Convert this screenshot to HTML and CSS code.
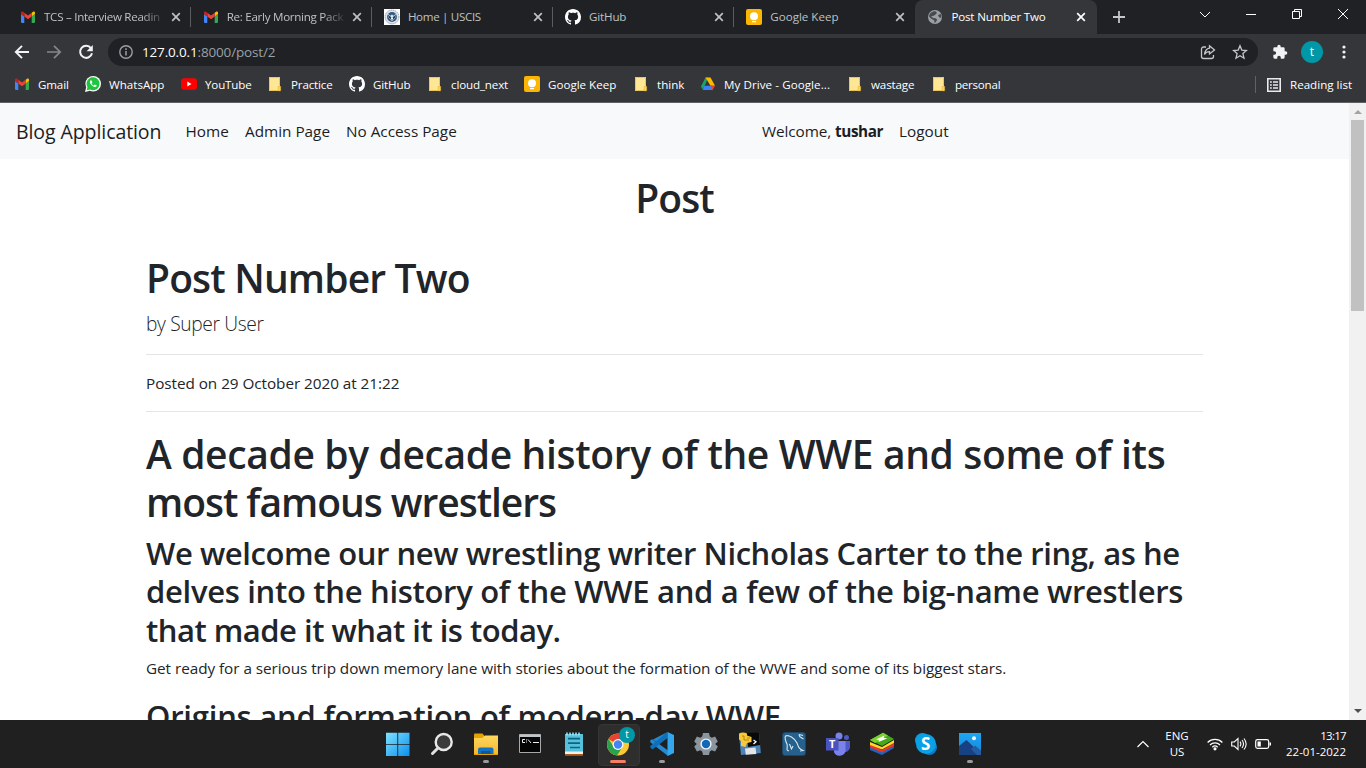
FILE: index.html
```html
<!DOCTYPE html>
<html lang="en">
<head>
<meta charset="utf-8">
<title>Post Number Two</title>
<link rel="stylesheet" href="styles.css">
</head>
<body>
<svg class="defs" width="0" height="0">
  <defs>
    <linearGradient id="winblue" x1="0" y1="0" x2="1" y2="1"><stop offset="0" stop-color="#7fe3ff"/><stop offset="1" stop-color="#0a8fee"/></linearGradient>
    <linearGradient id="foldgrad" x1="0" y1="0" x2="0" y2="1"><stop offset="0" stop-color="#ffd75e"/><stop offset="1" stop-color="#f5b62c"/></linearGradient>
    <linearGradient id="photograd" x1="0" y1="0" x2="0" y2="1"><stop offset="0" stop-color="#1ea7f0"/><stop offset="1" stop-color="#1684dd"/></linearGradient>
    <symbol id="gmail" viewBox="0 0 16 16"><path fill="#4285f4" d="M1 5l3.300 2.400V14H2.100A1.100 1.100 0 0 1 1 12.900z"/><path fill="#34a853" d="M11.700 7.400L15 5v7.900a1.100 1.100 0 0 1-1.100 1.100h-2.200z"/><path fill="#fbbc04" d="M11.700 3.800L13 2.800c.9-.6 2 0 2 1.100V5l-3.300 2.500z"/><path fill="#ea4335" d="M4.300 7.500V3.700L8 6.500l3.700-2.800v3.800L8 10.300z"/><path fill="#c5221f" d="M1 3.900c0-1.100 1.200-1.700 2-1.100l1.300 1v3.700L1 5z"/></symbol>
    <symbol id="github" viewBox="0 0 16 16"><path fill="#fff" d="M8 0C3.580 0 0 3.580 0 8c0 3.540 2.290 6.530 5.470 7.590.4.070.55-.17.55-.38 0-.19-.010-.82-.010-1.490-2.010.37-2.530-.49-2.690-.94-.090-.23-.48-.94-.82-1.130-.28-.15-.68-.52-.010-.53.63-.010 1.080.58 1.230.82.72 1.210 1.870.87 2.330.66.070-.52.28-.87.510-1.070-1.780-.2-3.640-.89-3.640-3.950 0-.87.310-1.590.82-2.150-.080-.2-.36-1.020.080-2.120 0 0 .67-.21 2.200.82.64-.18 1.320-.27 2-.27s1.360.090 2 .27c1.530-1.040 2.200-.82 2.200-.82.44 1.100.16 1.920.080 2.120.51.56.82 1.270.82 2.150 0 3.070-1.870 3.750-3.650 3.950.29.25.54.73.54 1.480 0 1.070-.010 1.930-.010 2.200 0 .21.15.46.55.38A8 8 0 0 0 16 8c0-4.420-3.580-8-8-8z"/></symbol>
    <symbol id="keep" viewBox="0 0 16 16"><rect width="16" height="16" rx="2" fill="#fbb504"/><circle cx="8" cy="7.200" r="4" fill="#fff"/><path fill="#fff" d="M6 9h4v2H6zM6 12h4v1.300H6z"/></symbol>
    <symbol id="folder" viewBox="0 0 16 16"><path fill="#ffe695" d="M2 1h11v14H2z"/><path fill="none" stroke="#eac557" d="M2.500 14.500v-13h10v8M2.500 14.500h9"/><path fill="#ffd560" stroke="#e2b93c" stroke-width=".7" d="M11.200 10.500h2.400v4.200h-2.400z"/></symbol>
    <symbol id="close" viewBox="0 0 10 10"><path d="M1.200 1.200l7.600 7.600M8.800 1.200L1.200 8.800" stroke="currentColor" stroke-width="1.700" fill="none"/></symbol>
  </defs>
</svg>

<div class="screen">
<header class="tabstrip">
  <div class="tab first"><svg class="fav"><use href="#gmail"/></svg><span class="title fade">TCS – Interview Readin</span><svg class="x"><use href="#close"/></svg></div>
  <div class="tab"><svg class="fav"><use href="#gmail"/></svg><span class="title fade">Re: Early Morning Pack</span><svg class="x"><use href="#close"/></svg></div>
  <div class="tab uscis"><svg class="fav" viewBox="0 0 16 16"><path fill="#fff" d="M0 0h16v16H0z"/><circle cx="8" cy="8" r="6.900" fill="#dfe5ec" stroke="#8fa0b3" stroke-dasharray="1.500 .7"/><circle cx="8" cy="8" r="4.900" fill="#34597c"/><path d="M3.500 4.800l3.300 2L8 5.300l1.200 1.500 3.300-2-.9 3.800L8 12.200 4.400 8.600z" fill="#dbe5ed"/><path d="M3.900 5.500L7 8h2l3.100-2.500-.8 3L8 11.500 4.700 8.500z" fill="#1d405f"/><path d="M7 8.200h2V10l-1 1-1-1z" fill="#f4f4f4"/></svg><span class="title">Home | USCIS</span><svg class="x"><use href="#close"/></svg></div>
  <div class="tab"><svg class="fav"><use href="#github"/></svg><span class="title">GitHub</span><svg class="x"><use href="#close"/></svg></div>
  <div class="tab nosep keep"><svg class="fav"><use href="#keep"/></svg><span class="title">Google Keep</span><svg class="x"><use href="#close"/></svg></div>
  <div class="tab active"><svg class="fav" viewBox="0 0 16 16"><circle cx="8" cy="8" r="7" fill="#9aa0a6"/><path d="M8.500 2.200L10 4 8 6 6 7l-2 .2 2.500 2L8 9l2.200 1.500L9 13l-1.500 1-.2-2.500L4 9.500 2 7.500C2.200 4.500 5 2 8.500 2.200zM11 6l3-1 .4 4-2.400-.8z" fill="#484a4e"/></svg><span class="title">Post Number Two</span><svg class="x"><use href="#close"/></svg></div>
  <svg class="plus" viewBox="0 0 12 12"><path d="M6 0v12M0 6h12" stroke="#c4c7ca" stroke-width="1.800"/></svg>
  <div class="winctl">
    <svg viewBox="0 0 12 12"><path d="M1 4l5 5 5-5"/></svg>
    <svg viewBox="0 0 12 12"><path d="M1 6.500h10"/></svg>
    <svg viewBox="0 0 12 12"><path d="M1.500 3.500h7v7h-7zM3.500 3.500v-2h7v7h-2"/></svg>
    <svg viewBox="0 0 12 12"><path d="M1 1l10 10M11 1L1 11"/></svg>
  </div>
</header>

<div class="toolbar">
  <svg class="tb" viewBox="0 0 16 16"><path d="M15 8H2M8 1.800L1.800 8 8 14.200" fill="none" stroke="#f1f3f4" stroke-width="1.900"/></svg>
  <svg class="tb" viewBox="0 0 16 16"><path d="M1 8h13M8 1.800L14.200 8 8 14.200" fill="none" stroke="#85878a" stroke-width="1.700"/></svg>
  <svg class="tb" viewBox="0 0 16 16"><path d="M13 4.300A6 6 0 1 0 14 9.200" fill="none" stroke="#f1f3f4" stroke-width="2"/><path d="M14.800 1v6.200H8.600z" fill="#f1f3f4"/></svg>
  <div class="omnibox">
    <svg class="info" viewBox="0 0 14 14"><circle cx="7" cy="7" r="6.200" fill="none" stroke="#9aa0a6" stroke-width="1.400"/><path d="M7 6v4.500M7 3.300v1.600" stroke="#9aa0a6" stroke-width="1.500"/></svg>
    <span class="url"><b>127.0.0.1</b>:8000/post/2</span>
    <svg class="share" viewBox="0 0 16 16"><path d="M6 3H3.500A2 2 0 0 0 1.500 5v7.500a2 2 0 0 0 2 2h8a2 2 0 0 0 2-2V11"/><path d="M9.500 1.800L14.500 6l-5 4V7.700C7 7.700 5.500 8.700 4.500 10.500 5 7 6.500 4.600 9.500 4.200z"/></svg>
    <svg class="star" viewBox="0 0 16 16"><path d="M8 1.800l1.800 4.300 4.700.4-3.600 3.100 1.100 4.600L8 11.800l-4 2.400 1.100-4.600L1.500 6.500l4.700-.4z"/></svg>
  </div>
  <svg class="puzzle" viewBox="0 0 24 24"><path fill="#f1f3f4" d="M20.500 11H19V7a2 2 0 0 0-2-2h-4V3.500a2.500 2.500 0 0 0-5 0V5H4a2 2 0 0 0-2 2v3.800h1.500a2.700 2.700 0 0 1 0 5.400H2V20a2 2 0 0 0 2 2h3.800v-1.500a2.700 2.700 0 0 1 5.400 0V22H17a2 2 0 0 0 2-2v-4h1.500a2.500 2.500 0 0 0 0-5z"/></svg>
  <span class="avatar">t</span>
  <svg class="dots" viewBox="0 0 4 16"><circle cx="2" cy="3" r="1.600"/><circle cx="2" cy="8" r="1.600"/><circle cx="2" cy="13" r="1.600"/></svg>
</div>

<nav class="bookmarks">
  <div class="bm"><svg><use href="#gmail"/></svg><span>Gmail</span></div>
  <div class="bm even"><svg viewBox="0 0 16 16"><circle cx="8.200" cy="7.800" r="7.800" fill="#fff"/><path d="M0 16l1.300-5L5 14.700z" fill="#fff"/><path d="M1.700 14.300l.8-3.200a6.500 6.500 0 1 1 2.600 2.400z" fill="#20c43f"/><path d="M5.700 4.200c-1.500 1-.9 3 .8 4.800s3.900 2.700 5.200 1.100c.3-.7-.1-1-1.900-1.600l-.9 1C7.800 9.200 7 8.300 6.600 7.400l.8-1c-.5-1.500-.8-2.400-1.700-2.200z" fill="#fff"/></svg><span>WhatsApp</span></div>
  <div class="bm"><svg viewBox="0 0 16 16"><rect y="2.200" width="16" height="11.600" rx="3" fill="#f00"/><path d="M6.300 5.600v4.800l4.200-2.400z" fill="#fff"/></svg><span>YouTube</span></div>
  <div class="bm"><svg><use href="#folder"/></svg><span>Practice</span></div>
  <div class="bm"><svg><use href="#github"/></svg><span>GitHub</span></div>
  <div class="bm"><svg><use href="#folder"/></svg><span>cloud_next</span></div>
  <div class="bm even"><svg><use href="#keep"/></svg><span>Google Keep</span></div>
  <div class="bm even"><svg><use href="#folder"/></svg><span>think</span></div>
  <div class="bm wide"><svg viewBox="0 0 16 16"><path fill="#1ea362" d="M5.500 1.500h2.600L5.500 8 2.700 13.500 1 10.500z"/><path fill="#ffba00" d="M5.500 1.500h5L15 9.700h-4.500z"/><path fill="#3b82f6" d="M4.300 9.700h7.300l1.400 4.300H2.800z"/><path fill="#ea4335" d="M10.500 9.700H15l-2.300 4z"/></svg><span>My Drive - Google...</span></div>
  <div class="bm"><svg><use href="#folder"/></svg><span>wastage</span></div>
  <div class="bm tight"><svg><use href="#folder"/></svg><span>personal</span></div>
  <div class="bm even reading"><svg viewBox="0 0 16 16"><path d="M1.800 1.800h12.400v12.400H1.800z" fill="none" stroke="#e8eaed" stroke-width="1.600"/><path d="M4 5h1.800M4 8h1.800M4 11h1.800M7 5h5M7 8h5M7 11h5" stroke="#e8eaed" stroke-width="1.400"/></svg><span>Reading list</span></div>
</nav>

<div class="viewport">
  <main class="page">
    <nav class="navbar">
      <div class="left">
        <a class="brand">Blog Application</a>
        <a class="link home">Home</a>
        <a class="link admin">Admin Page</a>
        <a class="link">No Access Page</a>
      </div>
      <div class="right">
        <a class="link welcome">Welcome, <b>tushar</b></a>
        <a class="link">Logout</a>
      </div>
    </nav>
    <h1 class="pagehead">Post</h1>
    <article class="post">
      <h1 class="posttitle">Post Number Two</h1>
      <p class="lead">by Super User</p>
      <hr>
      <p class="posted">Posted on 29 October 2020 at 21:22</p>
      <hr>
      <h1 class="headline"><span class="h1-first">A decade by decade history of the WWE and some of its</span><br><span class="h1-second">most famous wrestlers</span></h1>
      <h2 class="intro"><span class="h2-first">We welcome our new wrestling writer Nicholas Carter to the ring, as he</span><br><span class="h2-second">delves into the history of the WWE and a few of the big-name wrestlers</span><br><span class="h2-third">that made it what it is today.</span></h2>
      <p class="body">Get ready for a serious trip down memory lane with stories about the formation of the WWE and some of its biggest stars.</p>
      <h2 class="origins">Origins and formation of modern-day WWE</h2>
    </article>
  </main>
  <aside class="scroll">
    <svg class="arrow" viewBox="0 0 8 4"><path d="M4 0l4 4H0z" fill="#a3a3a3"/></svg>
    <i class="thumb"></i>
    <svg class="arrow down" viewBox="0 0 8 4"><path d="M4 4L0 0h8z" fill="#505050"/></svg>
  </aside>
</div>

<footer class="taskbar">
  <div class="apps">
    <div class="app"><svg viewBox="0 0 24 24"><path fill="url(#winblue)" d="M0 .7h11.300V12H0zM12.200.7h11.300V12H12.200zM0 12.700h11.300V24H0zM12.200 12.700h11.300V24H12.200z"/></svg></div>
    <div class="app"><svg viewBox="0 0 24 24"><circle cx="13.700" cy="10" r="8" fill="#3b3b3b" stroke="#e9e9e9" stroke-width="2.400"/><path d="M8 16l-5.500 5.500" stroke="#e0e0e0" stroke-width="3" stroke-linecap="round"/></svg></div>
    <div class="app run"><svg viewBox="0 0 24 24"><path fill="#e5a100" d="M0 2.500Q0 1.500 1 1.500h7.500l2 2.500v5H0z"/><path fill="url(#foldgrad)" d="M0 6h8l3-2.500h13V23H0z"/><path fill="#1673c4" d="M4 22v-4.500Q4 15.500 6 15.500h11.500q2 0 2 2V22z"/><path fill="#0c57a0" d="M7 19h9.500v3H7z"/><path fill="#e5a100" d="M0 22h24v1H0z"/></svg></div>
    <div class="app cmd"><svg viewBox="0 0 24 24"><path fill="#050505" stroke="#a8a8a8" d="M1.500 2.500h21v18h-21z"/><path fill="#bfc5c9" d="M1.500 2.500h21V5h-21z"/><path d="M7 7.500H4.500v3H7M8.500 7.500v1M8.500 9.500v1M10 7.500l3 3.500M15 10.500h6" fill="none" stroke="#eee"/></svg></div>
    <div class="app"><svg viewBox="0 0 24 24"><path fill="#55c1dc" d="M3 2h18v19H3z"/><path fill="#f5eee6" d="M3 19.500h18V22H3z"/><path fill="#a85a1c" d="M3 22h18v1.800H3z"/><path d="M5 .5v3M8 .5v3M11 .5v3M14 .5v3M17 .5v3" stroke="#a5e8f5" stroke-width="1.500"/><path d="M6 6.700h12M6 11.200h12M8 15.500h10" stroke="#11647d" stroke-width="1.700"/></svg></div>
    <div class="app run chrome"><svg viewBox="0 0 24 24"><circle cx="12" cy="12.500" r="11" fill="#fbc934"/><path d="M12 12.500L2.500 7A11 11 0 0 1 21.500 7.500H12z" fill="#e94235"/><path d="M2.500 7A11 11 0 0 0 11 23.450L16.500 15 7.500 14.500z" fill="#2aa14c"/><circle cx="12" cy="12.500" r="5.400" fill="#fff"/><circle cx="12" cy="12.500" r="4.200" fill="#4285f4"/></svg><em>t</em></div>
    <div class="app run"><svg viewBox="0 0 24 24"><path fill="#2489d0" d="M17.500 0L6.500 10.500 2.200 7.200.3 8.200v2L18 24v-5.500L3 7.500z"/><path fill="#0e70b8" d="M17.500 0v6L2.500 17.500.3 15.500v-1.500z"/><path fill="#34a6ee" d="M17.500 0L24 3v18l-6.500 3z"/></svg></div>
    <div class="app"><svg viewBox="0 0 24 24"><path fill="#8b959e" d="M9 1h6l.8 3.600 2 1.200 3.300-1.200 2.700 5-2.600 2.400 2.600 2.500-2.700 5-3.300-1.200-2 1.200L15 23H9l-.8-3.500-2-1.200-3.300 1.200-2.700-5L2.800 12 .2 9.600l2.700-5 3.300 1.200 2-1.200z"/><circle cx="12" cy="12" r="5.600" fill="#f2f5f8"/><circle cx="12" cy="12" r="4.200" fill="#1269b8"/></svg></div>
    <div class="app"><svg viewBox="0 0 24 24"><path fill="#4d83b7" d="M1.500 8L21 .5l1.800 20.500L3 23z"/><path fill="#08090a" d="M9 1l12-.5 1 12.500-12 2z"/><path fill="#e2e4e6" d="M7 16.500l10.500-1 .8 6.500-10.500.7z"/><path fill="#f8c936" d="M1 1.500Q5-.5 9 1.500V3.500l4.500 1.500v5l-4.500 1-1.500 4-4.500-1V9L1 7.500z"/><path fill="none" stroke="#a77a08" stroke-width=".8" d="M4 4h2v4h5M9 6h3"/><path fill="none" stroke="#fff" stroke-width="1.300" d="M15.500 8L18 9.800 15.500 12"/></svg></div>
    <div class="app"><svg viewBox="0 0 24 24"><rect x=".5" y=".5" width="23" height="23" rx="2.500" fill="#25618c" stroke="#1a4567"/><path d="M7 18.500C3.500 20 6 14.500 5 12 3.500 9 2.500 6 3.500 4c3-1.500 9 2 11.500 7 1.500 4 1.500 5.500 6 7.500l-3 .5M7.500 12l2 5 1.500-3M17 2.500c0 3 2 3 4.500 4.500M17 2.500l4 1" fill="none" stroke="#dce8f0" stroke-width="1.100"/></svg></div>
    <div class="app"><svg viewBox="0 0 24 24"><circle cx="13" cy="4" r="3.500" fill="#7b83eb"/><circle cx="20.500" cy="5.500" r="2.500" fill="#5059c9"/><path fill="#5059c9" d="M17 9h7v7q-2 5-7 4z"/><path fill="#7b83eb" d="M8 9h11.500v8a6 6 0 0 1-11.500 3z"/><path fill="#4b53bc" d="M0 6h12.500v12.500H0z"/></svg><strong>T</strong></div>
    <div class="app"><svg viewBox="0 0 24 24"><path fill="#1d65c1" d="M0 15l12 5 12-6v2l-12 7L0 18z"/><path fill="#e9362b" d="M0 12l12 6 12-7v3l-12 6.500L0 15.500z"/><path fill="#ffd629" d="M0 10l12 5 12-7v3l-12 6.500L0 13z"/><path fill="#45a919" d="M0 8L13 .8 24 7 12 14z"/><path fill="#7bd131" d="M0 8L13 .8 18 3.500 5 11z"/><path fill="#fff" d="M6 7.500l8.500-4L13.500 6l4 .2-9 3.800.5-2z"/></svg></div>
    <div class="app"><svg viewBox="0 0 24 24"><circle cx="8.500" cy="8.500" r="7.500" fill="#0b9fe3"/><circle cx="15.500" cy="15.500" r="7.500" fill="#0e77c5"/><circle cx="12" cy="12" r="10" fill="#0aa0e6"/></svg><strong class="skype">S</strong></div>
    <div class="app run"><svg viewBox="0 0 24 24"><path fill="url(#photograd)" d="M1 1h22v22H1z"/><path fill="#174182" d="M1 14l7.500-6L23 22v1H1z"/><path fill="#245ca4" d="M13 17l4-3.500 6 5V23h-4z"/><circle cx="16" cy="6.200" r="2" fill="#f1f6fa"/></svg></div>
  </div>
  <div class="tray">
    <svg class="up" viewBox="0 0 12 8"><path d="M.5 7L6 1.500 11.500 7" fill="none" stroke="#fff" stroke-width="1.200"/></svg>
    <div class="lang">ENG<br>US</div>
    <svg class="sys" viewBox="0 0 16 16" fill="none" stroke="#fff" stroke-width="1.200"><path d="M.6 6.500a10.500 10.500 0 0 1 14.800 0M3 9a7 7 0 0 1 10 0M5.300 11.200a4 4 0 0 1 5.400 0"/><circle cx="8" cy="12.800" r="1" fill="#fff"/></svg>
    <svg class="sys" viewBox="0 0 16 16" fill="none" stroke="#fff" stroke-width="1.100"><path d="M.7 6h2.600L7 2.600v10.800L3.300 10H.7zM9 5.700q1.700 2.300 0 4.600M11 4q3 4 0 8M13 2.500q4.300 5.500 0 11"/></svg>
    <svg class="sys" viewBox="0 0 16 16"><rect x=".7" y="3.600" width="13" height="8.800" rx="1.800" fill="none" stroke="#fff" stroke-width="1.200"/><path d="M2.500 5.400h3.300v5.200H2.500zM14.500 6.500h1.500v3h-1.500z" fill="#fff"/></svg>
    <div class="clock"><span class="time">13:17</span><br>22-01-2022</div>
  </div>
</footer>
</div>
</body>
</html>
```
FILE: styles.css
```css
* { box-sizing: border-box; }
body { margin: 0; font-family: "Open Sans", "Noto Sans", sans-serif; background: #fff; overflow: hidden; }
svg { display: block; flex: none; }
.defs { position: absolute; }
.screen { width: 1366px; height: 768px; display: flex; flex-direction: column; }

.tabstrip { height: 34px; flex: none; background: #202124; display: flex; padding-left: 9px; align-items: center; }
.tab { flex: none; width: 181.200px; height: 34px; display: flex; align-items: center; padding: 0 10px 0 12px; color: #bdc1c6; font-size: 11.600px; letter-spacing: -0.180px; background: linear-gradient(#5a5c5f, #5a5c5f) right center / 1px 20px no-repeat; }
.tab.first { width: 181.700px; padding-left: 11px; }
.tab.nosep { background: none; }
.tab.uscis { letter-spacing: -0.320px; }
.tab.keep { letter-spacing: 0; }
.tab.active { background: #35363a; border-radius: 8px 8px 0 0; color: #fff; width: 182px; padding-right: 11px; }
.fav { width: 16px; height: 16px; margin-right: 8px; }
.title { flex: 1; white-space: nowrap; overflow: hidden; line-height: 20px; }
.fade { -webkit-mask-image: linear-gradient(90deg, #000 80%, transparent); mask-image: linear-gradient(90deg, #000 80%, transparent); }
.fade { letter-spacing: -0.280px; }
.x { width: 10px; height: 10px; margin-left: 5px; }
.plus { width: 12px; height: 12px; margin-left: 16px; }
.winctl { flex: 1; display: flex; justify-content: flex-end; gap: 34px; padding: 0 17px 6px 0; }
.winctl svg { width: 12px; height: 12px; fill: none; stroke: #fff; stroke-width: 1; }

.toolbar { height: 36px; flex: none; background: #35363a; display: flex; align-items: center; padding-left: 14px; }
.tb { width: 16px; height: 16px; margin-right: 16px; }
.omnibox { width: 1150px; height: 28px; margin-left: -2px; border-radius: 14px; background: #202124; display: flex; align-items: center; padding: 0 10px 0 11px; }
.info { width: 14px; height: 14px; margin-right: 9px; }
.url { font-size: 13.500px; letter-spacing: -0.160px; color: #9aa0a6; white-space: nowrap; }
.url b { font-weight: 400; color: #fff; }
.share { width: 16px; height: 16px; margin-left: auto; }
.star { width: 16px; height: 16px; margin-left: 16px; }
.share, .star { fill: none; stroke: #c4c7ca; stroke-width: 1.300; }
.puzzle { width: 16px; height: 16px; margin-left: 14px; }
.avatar { width: 22px; height: 22px; margin-left: 13px; border-radius: 50%; background: #0097a7; color: #fff; font-size: 12px; line-height: 21px; text-align: center; }
.dots { width: 4px; height: 16px; margin-left: 19px; fill: #f1f3f4; }

.bookmarks { height: 33px; flex: none; background: #35363a; border-bottom: 1px solid #606164; display: grid; grid-template-columns: 71px 96px 86px 82px 78px 97px 109px 67px 147px 84px 324px auto; padding: 3px 0 0 14px; }
.bm { display: flex; height: 22px; align-items: center; gap: 8px; color: #fff; font-size: 11.600px; letter-spacing: -0.150px; white-space: nowrap; }
.bm.even { letter-spacing: 0; }
.bm.wide { letter-spacing: 0.070px; }
.bm.tight { letter-spacing: -0.250px; }
.bm svg { width: 16px; height: 16px; }
.reading { margin-top: 3px; height: 17px; border-left: 1px solid #5f6368; padding-left: 10px; }

.viewport { height: 617px; flex: none; display: flex; }
.page { width: 1349px; height: 617px; overflow: hidden; color: #212529; }
.navbar { height: 56px; background: #f8f9fa; display: flex; color: #1b1d1f; align-items: center; padding-left: 16px; }
.left { display: flex; align-items: center; width: 746px; }
.right { display: flex; gap: 16px; }
.brand { font-size: 19.500px; letter-spacing: -0.080px; width: 169.500px; white-space: nowrap; }
.link { font-size: 15.300px; white-space: nowrap; }
.home { width: 59.500px; }
.admin { width: 101px; }
.welcome { letter-spacing: -0.080px; }
.welcome b { letter-spacing: -0.420px; }
h1, h2, p { margin: 0; font-weight: 600; white-space: nowrap; }
h1 { font-size: 39px; line-height: 48px; }
h2 { font-size: 31px; line-height: 38.400px; }
.pagehead { margin-top: 15px; text-align: center; letter-spacing: -0.950px; }
.posttitle { letter-spacing: -0.830px; }
.post { padding: 32px 146px 0; }
p { font-weight: 400; font-size: 15.300px; line-height: 24px; }
.lead { font-size: 19.200px; line-height: 30px; font-weight: 300; letter-spacing: -0.350px; margin-top: 7px; }
.posted { letter-spacing: -0.050px; }
hr { border: 0; border-top: 1px solid #e4e5e6; margin: 16px 0; }
.lead + hr { margin-top: 15px; }
.headline { margin-top: 18px; }
.h1-first { letter-spacing: -0.360px; }
.h1-second { letter-spacing: -1.040px; }
.intro { margin-top: 8px; }
.h2-first { letter-spacing: -0.420px; }
.h2-second { letter-spacing: -0.300px; }
.h2-third { letter-spacing: -0.500px; }
.body { margin-top: 7px; margin-bottom: 17px; letter-spacing: -0.048px; }
.origins { letter-spacing: -0.220px; }

.scroll { width: 17px; background: #f1f1f1; display: flex; flex-direction: column; align-items: center; }
.arrow { width: 8px; height: 4px; margin: 7px 0 6px; }
.thumb { width: 13px; height: 191px; background: #c1c1c1; }
.down { margin: auto 0 7px; }

.taskbar { height: 48px; flex: none; background: #202020; display: flex; padding-left: 376px; }
.apps { display: flex; height: 48px; align-items: center; }
.app { width: 44px; height: 48px; display: flex; align-items: center; justify-content: center; position: relative; }
.app svg { width: 24px; height: 24px; }
.cmd { padding-right: 1px; }
.run::after { content: ""; position: absolute; left: 19px; top: 40px; width: 6px; height: 3px; border-radius: 2px; background: #9a9a9a; }
.chrome::before { content: ""; position: absolute; left: 2px; top: 4px; width: 40px; height: 40px; border-radius: 4px; background: #2e2e2e; border: 1px solid #363636; }
.chrome svg { position: relative; }
.chrome::after { left: 14px; width: 16px; background: #f47f63; }
.app em { position: absolute; left: 23px; top: 7px; width: 16px; height: 16px; border-radius: 50%; background: #0097a7; color: #fff; font: 10px/15px "Open Sans", sans-serif; text-align: center; }
.app strong { position: absolute; left: 13px; top: 16px; color: #fff; font-size: 11px; line-height: 16px; }
.app .skype { left: 17px; top: 15px; font-size: 17px; line-height: 18px; }
.tray { display: flex; align-items: center; color: #fff; font-size: 11.500px; line-height: 16px; margin-left: 145px; }
.up { width: 12px; height: 8px; }
.lang { width: 28px; margin-left: 14px; text-align: center; }
.sys { width: 16px; height: 16px; margin-left: 8px; }
.lang + .sys { margin-left: 16px; }
.clock { margin-left: 15px; width: 60px; text-align: right; white-space: nowrap; }
.time { letter-spacing: -0.700px; }
```
